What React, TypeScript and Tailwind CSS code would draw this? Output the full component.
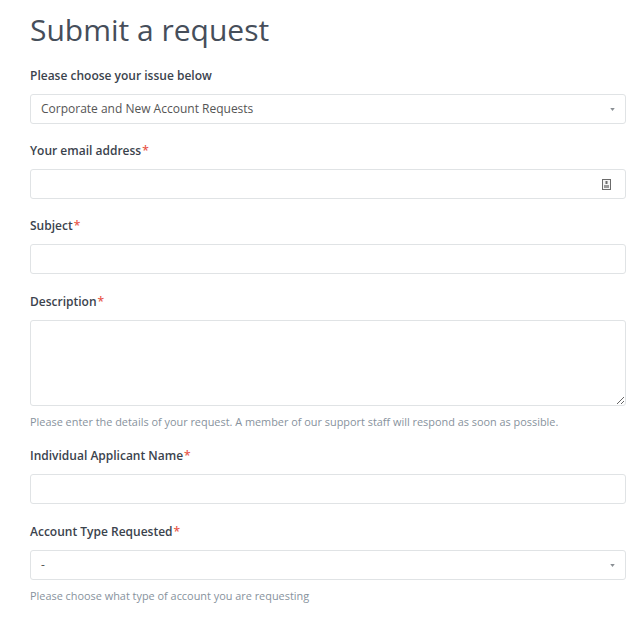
import { ReactNode } from 'react';

const font = { fontFamily: '"Open Sans", "Noto Sans", sans-serif' };

function Label({ children, required }: { children: ReactNode; required?: boolean }) {
  return (
    <label className="block text-[12px] font-semibold leading-[22px] text-[#3b434d] mb-[7px]">
      {children}
      {required && <span className="text-[#e8584c] ml-[1px]">*</span>}
    </label>
  );
}

function Hint({ children }: { children: ReactNode }) {
  return <p className="mt-[8px] text-[10.9px] leading-4 text-[#87929d]">{children}</p>;
}

function SelectBox({ value }: { value: string }) {
  return (
    <div className="flex items-center justify-between h-[30px] border border-[#e0e3e5] rounded-[3px] bg-white pl-[10px] pr-[10px]">
      <span className="text-[12px] text-[#555]">{value}</span>
      <svg width="5" height="3" viewBox="0 0 6 4">
        <path d="M0 0 L6 0 L3 4 Z" fill="#8a8f94" />
      </svg>
    </div>
  );
}

function TextInput({ icon }: { icon?: boolean }) {
  return (
    <div className="flex items-center justify-end h-[30px] border border-[#e0e3e5] rounded-[3px] bg-white pr-[14px]">
      {icon && (
        <svg width="9" height="11" viewBox="0 0 9 11">
          <rect x="0.5" y="0.5" width="8" height="10" fill="#f4f4f4" stroke="#6b6b6b" />
          <rect x="3.5" y="2" width="2" height="3" fill="#6b6b6b" />
          <rect x="2" y="6" width="5" height="3" fill="#9a9a9a" />
        </svg>
      )}
    </div>
  );
}

export default function App() {
  return (
    <div style={font} className="min-h-screen bg-white pl-[30px] pr-[14px] pt-[10px] pb-8 w-[640px]">
      <h1 className="text-[30px] leading-10 text-[#464e5a] font-normal mb-[15px]">Submit a request</h1>

      <div className="mb-[16px]">
        <Label>Please choose your issue below</Label>
        <SelectBox value="Corporate and New Account Requests" />
      </div>

      <div className="mb-[16px]">
        <Label required>Your email address</Label>
        <TextInput icon />
      </div>

      <div className="mb-[17px]">
        <Label required>Subject</Label>
        <TextInput />
      </div>

      <div className="mb-[15px]">
        <Label required>Description</Label>
        <textarea className="block w-full h-[86px] border border-[#e0e3e5] rounded-[3px] bg-white outline-none" />
        <Hint>
          Please enter the details of your request. A member of our support staff will respond as soon as possible.
        </Hint>
      </div>

      <div className="mb-[17px]">
        <Label required>Individual Applicant Name</Label>
        <TextInput />
      </div>

      <div>
        <Label required>Account Type Requested</Label>
        <SelectBox value="-" />
        <Hint>Please choose what type of account you are requesting</Hint>
      </div>
    </div>
  );
}
